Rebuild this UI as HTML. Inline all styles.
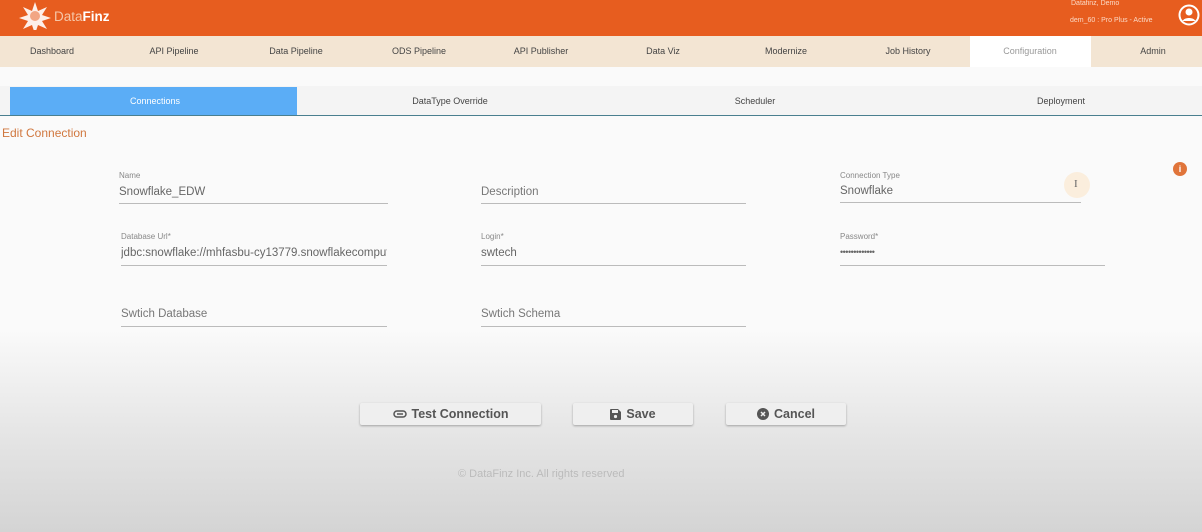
<!DOCTYPE html>
<html><head><style>
*{margin:0;padding:0;box-sizing:border-box}
body{width:1202px;height:532px;overflow:hidden;font-family:"Liberation Sans",sans-serif;background:linear-gradient(#fafafa 0,#fafafa 330px,#e6e6e6 430px,#d4d4d4 532px);position:relative}
.a{position:absolute;white-space:nowrap}
.hdr{left:0;top:0;width:1202px;height:36px;background:#e75d1f}
.nav{left:0;top:36px;width:1202px;height:31px;background:#f3e5d3}
.n{top:46px;font-size:9px;color:#444;transform:translateX(-50%)}
.st{top:96px;font-size:9px;color:#444;transform:translateX(-50%)}
.lbl{font-size:8px;color:#888}
.val{font-size:11.5px;color:#666}
.ph{font-size:11.5px;color:#777}
.ln{height:1px;background:#bbb}
.btn{top:403px;height:22px;background:#efefef;box-shadow:0 1px 2px rgba(0,0,0,.3);font-weight:bold;font-size:12.5px;color:#555;display:flex;align-items:center;justify-content:center;gap:5px;border-radius:2px}
</style></head><body>
<div class="a hdr"></div>
<svg class="a" style="left:18px;top:2px" width="34" height="28" viewBox="0 0 34 28"><g fill="#fff" opacity=".9"><path d="M17 0l3 9 9-4-5 8 9 3-9 3 5 8-9-4-3 9-3-9-9 4 5-8-9-3 9-3-5-8 9 4z"/></g><circle cx="17" cy="14" r="5" fill="#e75d1f" opacity=".5"/></svg>
<div class="a" style="left:54px;top:9px;font-size:13.5px;color:#f6c7a8">Data<b style="color:#fff">Finz</b></div>
<div class="a" style="left:1071px;top:0px;font-size:7px;color:#fbd9c5">Datafinz, Demo</div>
<div class="a" style="left:1070px;top:17px;font-size:7px;color:#fbd9c5">dem_60 : Pro Plus - Active</div>
<svg class="a" style="left:1178px;top:3px" width="22" height="24" viewBox="0 0 22 24"><circle cx="11" cy="12" r="9.5" fill="none" stroke="#fff" stroke-width="2"/><circle cx="11" cy="9" r="3.5" fill="#fff"/><path d="M4.5 18c2-4 11-4 13 0z" fill="#fff"/></svg>
<div class="a nav"></div>
<div class="a" style="left:970px;top:36px;width:121px;height:31px;background:#fff"></div>
<div class="a n" style="left:52px">Dashboard</div>
<div class="a n" style="left:174px">API Pipeline</div>
<div class="a n" style="left:296px">Data Pipeline</div>
<div class="a n" style="left:419px">ODS Pipeline</div>
<div class="a n" style="left:541px">API Publisher</div>
<div class="a n" style="left:663px">Data Viz</div>
<div class="a n" style="left:786px">Modernize</div>
<div class="a n" style="left:908px">Job History</div>
<div class="a n" style="left:1030px;color:#999">Configuration</div>
<div class="a n" style="left:1153px">Admin</div>
<div class="a" style="left:0;top:86px;width:1202px;height:29px;background:#f4f4f4"></div>
<div class="a" style="left:10px;top:87px;width:287px;height:28px;background:#5badf6"></div>
<div class="a" style="left:0;top:115px;width:1202px;height:1px;background:#4a7f8f"></div>
<div class="a st" style="left:155px;color:#fff">Connections</div>
<div class="a st" style="left:450px">DataType Override</div>
<div class="a st" style="left:755px">Scheduler</div>
<div class="a st" style="left:1061px">Deployment</div>
<div class="a" style="left:2px;top:126px;font-size:12px;color:#d0773e">Edit Connection</div>

<div class="a lbl" style="left:119px;top:171px">Name</div>
<div class="a val" style="left:119px;top:186px">Snowflake_EDW</div>
<div class="a ln" style="left:119px;top:203px;width:269px"></div>
<div class="a ph" style="left:481px;top:186px">Description</div>
<div class="a ln" style="left:481px;top:203px;width:265px"></div>
<div class="a lbl" style="left:840px;top:171px">Connection Type</div>
<div class="a val" style="left:840px;top:185px">Snowflake</div>
<div class="a ln" style="left:840px;top:202px;width:241px"></div>
<div class="a" style="left:1064px;top:172px;width:26px;height:26px;border-radius:50%;background:#fbeedd"></div>
<div class="a" style="left:1074px;top:178px;font-size:11px;color:#666;font-family:'Liberation Serif',serif">I</div>
<div class="a" style="left:1173px;top:162px;width:14px;height:14px;border-radius:50%;background:#e0743a;color:#fff;font-size:9px;text-align:center;line-height:14px;font-weight:bold">i</div>

<div class="a lbl" style="left:121px;top:232px">Database Url*</div>
<div class="a val" style="left:121px;top:247px;width:266px;overflow:hidden">jdbc:snowflake://mhfasbu-cy13779.snowflakecomputing.com</div>
<div class="a ln" style="left:121px;top:265px;width:266px"></div>
<div class="a lbl" style="left:481px;top:232px">Login*</div>
<div class="a val" style="left:481px;top:247px">swtech</div>
<div class="a ln" style="left:481px;top:265px;width:265px"></div>
<div class="a lbl" style="left:840px;top:232px">Password*</div>
<div class="a val" style="left:840px;top:247px;font-size:9px;letter-spacing:-0.5px">•••••••••••••</div>
<div class="a ln" style="left:840px;top:265px;width:265px"></div>

<div class="a ph" style="left:121px;top:308px">Swtich Database</div>
<div class="a ln" style="left:121px;top:326px;width:266px"></div>
<div class="a ph" style="left:481px;top:308px">Swtich Schema</div>
<div class="a ln" style="left:481px;top:326px;width:265px"></div>

<div class="a btn" style="left:360px;width:181px"><svg width="14" height="8" viewBox="0 0 14 8"><rect x="1" y="1" width="12" height="6" rx="3" fill="none" stroke="#555" stroke-width="1.5"/><path d="M4 4h6" stroke="#555" stroke-width="1.5"/></svg>Test Connection</div>
<div class="a btn" style="left:573px;width:120px"><svg width="11" height="11" viewBox="0 0 11 11"><path d="M0 1a1 1 0 011-1h7l3 3v7a1 1 0 01-1 1H1a1 1 0 01-1-1z" fill="#555"/><rect x="2" y="1" width="6" height="3" fill="#efefef"/><circle cx="5.5" cy="7.5" r="1.6" fill="#efefef"/></svg>Save</div>
<div class="a btn" style="left:726px;width:120px"><svg width="12" height="12" viewBox="0 0 12 12"><circle cx="6" cy="6" r="6" fill="#555"/><path d="M4 4l4 4M8 4l-4 4" stroke="#efefef" stroke-width="1.5"/></svg>Cancel</div>
<div class="a" style="left:458px;top:468px;font-size:11px;color:#bbb">© DataFinz Inc. All rights reserved</div>
</body></html>
